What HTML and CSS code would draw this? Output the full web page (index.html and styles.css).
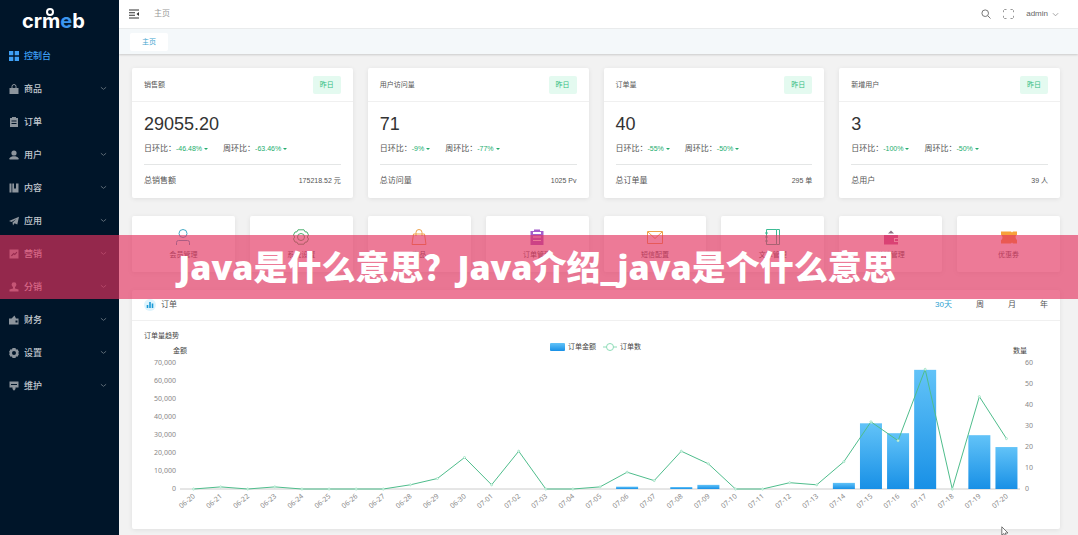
FILE: index.html
```html
<!DOCTYPE html>
<html lang="zh-CN">
<head>
<meta charset="utf-8">
<title>CRMEB 控制台</title>
<link rel="stylesheet" href="styles.css">
</head>
<body>
<div class="app">
  <aside class="sidebar">
    <a class="logo" href="#" aria-label="crmeb">
      <svg width="70" height="28" viewBox="0 0 70 28" aria-hidden="true">
        <circle cx="30" cy="6" r="3" fill="none" stroke="#fff" stroke-width="2"/>
        <text class="logo-text" x="2" y="22">crm<tspan class="logo-e">e</tspan>b</text>
      </svg>
    </a>
    <nav class="menu">
      <a class="item active" href="#"><svg class="ico" viewBox="0 0 10 10"><path d="M0 0h4.300v4.300H0zM5.700 0H10v4.300H5.700zM0 5.700h4.300V10H0zM5.700 5.700H10V10H5.700z"/></svg><span>控制台</span></a>
      <a class="item" href="#"><svg class="ico" viewBox="0 0 10 10"><path d="M.5 4h9v6h-9z"/><path class="ln" d="M3 4V2.500a2 2 0 0 1 4 0V4"/></svg><span>商品</span><svg class="chev" viewBox="0 0 8 8"><path d="M1 2.500l3 2.500 3-2.500"/></svg></a>
      <a class="item" href="#"><svg class="ico" viewBox="0 0 10 10"><path fill-rule="evenodd" d="M1 1h2V0h4v1h2v9H1zM2.500 3.500v1h5v-1zM2.500 6v1h5V6z"/></svg><span>订单</span></a>
      <a class="item" href="#"><svg class="ico" viewBox="0 0 10 10"><circle cx="5" cy="3" r="2.600"/><path d="M.5 9.500V8.200C1.500 6.800 3 6.300 5 6.300s3.500.5 4.500 1.900v1.300z"/></svg><span>用户</span><svg class="chev" viewBox="0 0 8 8"><path d="M1 2.500l3 2.500 3-2.500"/></svg></a>
      <a class="item" href="#"><svg class="ico" viewBox="0 0 10 10"><path d="M.5.5h2v9h-2zM3.300.5H5V6l1-1 1 1V.5h2.500v9H3.300z"/></svg><span>内容</span><svg class="chev" viewBox="0 0 8 8"><path d="M1 2.500l3 2.500 3-2.500"/></svg></a>
      <a class="item" href="#"><svg class="ico" viewBox="0 0 10 10"><path d="M0 5L10 .7 8.300 8.500 5.500 7.200 4 9.500 3.500 6.500 7.500 3 2.600 6z"/></svg><span>应用</span><svg class="chev" viewBox="0 0 8 8"><path d="M1 2.500l3 2.500 3-2.500"/></svg></a>
      <a class="item" href="#"><svg class="ico" viewBox="0 0 10 10"><path fill-rule="evenodd" d="M.5.5h9v9h-9zM2 6.500l.8.800 2-2 1 1L8.300 3.500l-.7-.7-1.800 2-1-1z"/></svg><span>营销</span><svg class="chev" viewBox="0 0 8 8"><path d="M1 2.500l3 2.500 3-2.500"/></svg></a>
      <a class="item" href="#"><svg class="ico" viewBox="0 0 10 10"><circle cx="5" cy="2.700" r="2.400"/><path d="M4 4h2v2.500l3.500 1v2h-9v-2l3.500-1z"/></svg><span>分销</span><svg class="chev" viewBox="0 0 8 8"><path d="M1 2.500l3 2.500 3-2.500"/></svg></a>
      <a class="item" href="#"><svg class="ico" viewBox="0 0 10 10"><path fill-rule="evenodd" d="M0 3.500h2.500L5.500.5l1.500 3h2.500v6H0zM6.500 5.500v2h2v-2z"/></svg><span>财务</span><svg class="chev" viewBox="0 0 8 8"><path d="M1 2.500l3 2.500 3-2.500"/></svg></a>
      <a class="item" href="#"><svg class="ico" viewBox="0 0 10 10"><path fill-rule="evenodd" d="M3.500 0h3l.5 1.500 1.500-.2L10 4l-.9 1L10 6l-1.500 2.700L7 8.500 6.500 10h-3L3 8.500l-1.500.2L0 6l.9-1L0 4l1.500-2.700 1.500.2zM5 3a2 2 0 1 0 0 4 2 2 0 0 0 0-4z"/></svg><span>设置</span><svg class="chev" viewBox="0 0 8 8"><path d="M1 2.500l3 2.500 3-2.500"/></svg></a>
      <a class="item" href="#"><svg class="ico" viewBox="0 0 10 10"><path fill-rule="evenodd" d="M.5.5h9v6H6.500V8L5 9.800 3.500 8V6.500h-3zM2 3v1h6V3z"/></svg><span>维护</span><svg class="chev" viewBox="0 0 8 8"><path d="M1 2.500l3 2.500 3-2.500"/></svg></a>
    </nav>
  </aside>

  <div class="main">
    <header class="topbar">
      <button class="icon-btn" aria-label="折叠菜单"><svg width="10" height="10" viewBox="0 0 10 10"><path d="M0 1h10M0 3.700h6M0 6.300h6M0 9h10" stroke="#333" stroke-width="1.100"/><path d="M10 3v4L7.500 5z" fill="#333"/></svg></button>
      <span class="crumb">主页</span>
      <div class="tools">
        <button class="icon-btn" aria-label="搜索"><svg width="10" height="10" viewBox="0 0 10 10" fill="none" stroke="#777"><circle cx="4.200" cy="4.200" r="3.300"/><path d="M6.700 6.700L9.500 9.500"/></svg></button>
        <button class="icon-btn" aria-label="全屏"><svg width="11" height="10" viewBox="0 0 11 10" fill="none" stroke="#999"><path d="M.5 3.200V1.500l1-1h2M7.500.5h2l1 1v1.700M10.500 6.800v1.700l-1 1h-2M3.500 9.500h-2l-1-1V6.800"/></svg></button>
        <button class="user">admin<svg width="7" height="7" viewBox="0 0 8 8" fill="none" stroke="#999"><path d="M1 2.500l3 3 3-3"/></svg></button>
      </div>
    </header>
    <div class="tabs"><a class="tab" href="#">主页</a></div>

    <main class="content">
      <section class="stats">
        <article class="card stat">
          <div class="stat-head"><h2>销售额</h2><span class="badge">昨日</span></div>
          <div class="stat-body">
            <p class="num">29055.20</p>
            <p class="rates"><span>日环比：<b>-46.48%<i></i></b></span><span>周环比：<b>-63.46%<i></i></b></span></p>
            <p class="total"><span>总销售额</span><em>175218.52 元</em></p>
          </div>
        </article>
        <article class="card stat">
          <div class="stat-head"><h2>用户访问量</h2><span class="badge">昨日</span></div>
          <div class="stat-body">
            <p class="num">71</p>
            <p class="rates"><span>日环比：<b>-9%<i></i></b></span><span>周环比：<b>-77%<i></i></b></span></p>
            <p class="total"><span>总访问量</span><em>1025 Pv</em></p>
          </div>
        </article>
        <article class="card stat">
          <div class="stat-head"><h2>订单量</h2><span class="badge">昨日</span></div>
          <div class="stat-body">
            <p class="num">40</p>
            <p class="rates"><span>日环比：<b>-55%<i></i></b></span><span>周环比：<b>-50%<i></i></b></span></p>
            <p class="total"><span>总订单量</span><em>295 单</em></p>
          </div>
        </article>
        <article class="card stat">
          <div class="stat-head"><h2>新增用户</h2><span class="badge">昨日</span></div>
          <div class="stat-body">
            <p class="num">3</p>
            <p class="rates"><span>日环比：<b>-100%<i></i></b></span><span>周环比：<b>-50%<i></i></b></span></p>
            <p class="total"><span>总用户</span><em>39 人</em></p>
          </div>
        </article>
      </section>

      <section class="quick">
        <a class="card link" href="#"><svg viewBox="0 0 16 16" fill="none" stroke="#45a9c4"><circle cx="8" cy="4.500" r="4"/><path d="M1.500 16v-2.500q0-2 2-2h9q2 0 2 2V16"/></svg>会员管理</a>
        <a class="card link" href="#"><svg viewBox="0 0 16 16" fill="none" stroke="#4caf6e"><path d="M5 .8h6l1 2 2 .2 1.500 3L14.300 8l1.200 2-1.500 3-2 .2-1 2H5l-1-2-2-.2L.5 10l1.200-2L.5 6 2 3l2-.2z"/><circle cx="8" cy="8" r="3.500"/></svg>系统设置</a>
        <a class="card link" href="#"><svg viewBox="0 0 16 16" fill="none" stroke="#eda24d"><path d="M2.500 5h11l1.500 10.500H1zM5 7V3.500a3 3 0 0 1 6 0V7"/></svg>商品</a>
        <a class="card link" href="#"><svg viewBox="0 0 16 16" fill="#a45fcb"><path fill-rule="evenodd" d="M1.500 2H5V.5h6V2h3.500v14h-13zM4 3v2h8V3zM4 7.500v1h8v-1zM4 11v1h8v-1z"/></svg>订单管理</a>
        <a class="card link" href="#"><svg viewBox="0 0 16 16" fill="none" stroke="#eda24d"><path d="M.5 2.500h15v12H.5zM1 3l7 6.500L15 3"/></svg>短信配置</a>
        <a class="card link" href="#"><svg viewBox="0 0 16 16" fill="none" stroke="#3dbb94"><path d="M1.500.5h10v15h-10zM11.500.5h3v15h-3M0 4h3M0 8h3M0 12h3"/></svg>文章管理</a>
        <a class="card link" href="#"><svg viewBox="0 0 16 16" fill="#c9609b"><path fill-rule="evenodd" d="M1 6h14v3h-4v4h4v2.500H1zM12 10h3v2h-3z"/><path d="M5 4.500l3-3 3 3z" fill="#8d7385"/></svg>分销管理</a>
        <a class="card link" href="#"><svg viewBox="0 0 16 16" fill="#f7a23b"><path d="M0 2.500h10l1 1 1-1h4v3.300q-1.500.7-1.500 2.200T16 11.200v3.300h-4l-1-1-1 1H0v-3.300Q1.500 10 1.500 8.500T0 5.800z"/></svg>优惠券</a>
      </section>

      <section class="card orders">
        <div class="orders-head">
          <svg width="12" height="12" viewBox="0 0 12 12"><circle cx="6" cy="6" r="6" fill="#def4fd"/><path d="M3.500 9V6M6 9V3M8.500 9V4.500" stroke="#1b9ad6" stroke-width="1.600"/></svg>
          <h2>订单</h2>
          <div class="ranges"><button class="on">30天</button><button>周</button><button>月</button><button>年</button></div>
        </div>
        <svg class="chart" id="chart" viewBox="0 0 928 208" role="img" aria-label="订单量趋势">
          <defs><linearGradient id="bar" x1="0" y1="0" x2="0" y2="1"><stop offset="0" stop-color="#62c3f8"/><stop offset="1" stop-color="#1890e6"/></linearGradient></defs>
          <text class="name" x="12" y="17">订单量趋势</text>
          <text class="name" x="48" y="32" text-anchor="middle">金额</text>
          <text class="name" x="888" y="32" text-anchor="middle">数量</text>
          <rect x="418" y="22" width="15" height="8" rx="1" fill="url(#bar)"/>
          <text class="name" x="436" y="28">订单金额</text>
          <path d="M471 26h14" stroke="#8ddcb7"/><circle cx="478" cy="26" r="3.500" fill="#fff" stroke="#8ddcb7"/>
          <text class="name" x="488" y="28">订单数</text>
        </svg>
      </section>
    </main>
  </div>

  <div class="banner">Java是什么意思？Java介绍_java是个什么意思</div>
  <svg class="cursor" width="8" height="11" viewBox="0 0 8 11"><path d="M.8.8v8.400l2-1.700 1.200 2.800 1.300-.6L4.200 7H7z" fill="#fff" stroke="#555" stroke-width=".8"/></svg>
</div>
<script src="chart.js"></script>
</body>
</html>
```
FILE: styles.css
```css
* { box-sizing: border-box; }
body {
  margin: 0;
  background: #f2f2f2;
  color: #555;
  font: 8px/12px "Liberation Sans", "Noto Sans CJK SC", sans-serif;
}
h2, p { margin: 0; font-weight: 400; }
a { color: inherit; text-decoration: none; }
button { padding: 0; border: 0; background: none; color: inherit; font: inherit; cursor: pointer; }
svg { display: block; flex: none; }

.app { position: relative; display: flex; min-height: 100vh; overflow: hidden; }

.sidebar { flex: 0 0 119px; background: #001529; color: #c3c9d0; }
.logo { display: block; padding: 6px 20px 5px; }
.logo-text { font: 700 20px "Inter", sans-serif; fill: #fff; }
.logo-e { fill: #3c96ef; }
.item { display: flex; align-items: center; height: 33px; padding: 0 12px 0 9px; font-size: 9px; font-weight: 500; }
.item.active { color: #3fa0f5; }
.ico { width: 10px; height: 10px; margin-right: 5px; fill: #8d959d; }
.ico .ln { fill: none; stroke: #8d959d; }
.active .ico { fill: #3fa0f5; }
.chev { width: 7px; height: 7px; margin-left: auto; fill: none; stroke: #66727e; }

.main { flex: 1; min-width: 0; }
.topbar { display: flex; align-items: center; height: 29px; padding: 0 19px 0 10px; background: #fff; border-bottom: 1px solid #eceeef; }
.crumb { margin-left: 15px; color: #999; }
.tools { display: flex; align-items: center; gap: 12px; margin-left: auto; color: #666; }
.user { display: flex; align-items: center; gap: 4px; }
.tabs { display: flex; align-items: center; height: 25px; padding: 0 11px; background: #f4f8fa; box-shadow: 0 1px 2px rgba(0, 0, 0, .16); }
.tab { padding: 3px 12px; background: #fff; border-radius: 2px; color: #3fa5cf; font-size: 7px; }

.content { padding: 14px 18px 6px 13px; }
.card { background: #fff; border-radius: 2px; box-shadow: 0 1px 5px rgba(0, 0, 0, .08); }

.stats { display: grid; grid-template-columns: repeat(4, 1fr); gap: 15px; }
.stat-head { display: flex; align-items: center; justify-content: space-between; height: 34px; padding: 0 12px; border-bottom: 1px solid #f0f0f0; }
.stat-head h2 { font-size: 7px; }
.badge { padding: 3px 7px; border-radius: 2px; background: #e4faf0; color: #35bd82; font-size: 7px; }
.stat-body { padding: 12px 12px 11px; }
.num { color: #333; font-size: 18px; line-height: 20px; }
.rates { display: flex; gap: 15px; padding: 9px 0; border-bottom: 1px solid #e4e6e6; }
.rates b { color: #23ad6d; font-size: 7px; font-weight: 400; }
.rates i { display: inline-block; margin: 0 0 1px 2px; border: 2px solid transparent; border-top-color: #23ad6d; border-bottom: 0; }
.total { display: flex; justify-content: space-between; padding-top: 10px; }
.total em { font-size: 7px; font-style: normal; }

.quick { display: grid; grid-template-columns: repeat(8, 1fr); gap: 15px; margin: 18px 0; }
.link { display: flex; flex-direction: column; align-items: center; gap: 4px; padding: 13px 0 11px; font-size: 7px; }
.link svg { width: 16px; height: 16px; }

.orders-head { display: flex; align-items: center; gap: 5px; height: 31px; padding: 0 12px; border-bottom: 1px solid #f0f0f0; }
.orders-head h2 { font-size: 8px; }
.ranges { display: flex; gap: 24px; margin-left: auto; }
.ranges .on { color: #2d9fd0; }
.chart { width: 100%; height: auto; }
.chart text { font: 7px "Noto Sans", "Noto Sans CJK SC", sans-serif; fill: #888; }
.chart .name { fill: #444; }
.chart .line { fill: none; stroke: #4fbd8c; }
.chart .dot { fill: #fff; stroke: #a5e6c8; }
.chart .base { stroke: #ccc; }

.banner {
  position: absolute;
  inset: 235px 0 auto 0;
  padding: 8px 4px 8px 0;
  background: rgba(227, 51, 96, .65);
  color: #fff;
  font: 900 34px/48px "Noto Sans", "Noto Sans CJK SC", sans-serif;
  text-align: center;
  white-space: nowrap;
}
.cursor { position: absolute; left: 1001px; top: 526px; }
```
FILE: chart.js
```js
const days = [];
for (let d = 20; d <= 30; d++) days.push('06-' + d);
for (let d = 1; d <= 20; d++) days.push('07-' + String(d).padStart(2, '0'));
const counts = [0, 1, 0, 1, 0, 0, 0, 0, 2, 5, 15, 2, 18, 0, 0, 1, 8, 4, 18, 12, 0, 0, 3, 2, 13, 32, 23, 57, 0, 44, 24];
const amounts = { '07-06': 1300, '07-08': 1100, '07-09': 2300, '07-14': 3400, '07-15': 36500, '07-16': 31000, '07-17': 66200, '07-19': 29900, '07-20': 23300 };

const left = 48, right = 888, base = 168, height = 126;
const step = (right - left) / days.length;
const x = i => left + step * (i + 0.5);
const yCount = v => base - v / 60 * height;
const yAmount = v => base - v / 70000 * height;

let out = `<line class="base" x1="${left}" x2="${right}" y1="${base}" y2="${base}"/>`;
for (let v = 0; v <= 70000; v += 10000) {
  out += `<text x="44" y="${yAmount(v) + 2}" text-anchor="end">${v.toLocaleString('en-US')}</text>`;
}
for (let v = 0; v <= 60; v += 10) {
  out += `<text x="893" y="${yCount(v) + 2}">${v}</text>`;
}
days.forEach((day, i) => {
  out += `<text transform="translate(${x(i) + 2} ${base + 8}) rotate(-40)" text-anchor="end">${day}</text>`;
  if (amounts[day]) {
    const y = yAmount(amounts[day]);
    out += `<rect x="${x(i) - 11}" y="${y}" width="22" height="${base - y}" fill="url(#bar)"/>`;
  }
});
out += `<polyline class="line" points="${counts.map((v, i) => x(i) + ',' + yCount(v)).join(' ')}"/>`;
counts.forEach((v, i) => { out += `<circle class="dot" cx="${x(i)}" cy="${yCount(v)}" r="1"/>`; });
document.getElementById('chart').insertAdjacentHTML('beforeend', out);
```
